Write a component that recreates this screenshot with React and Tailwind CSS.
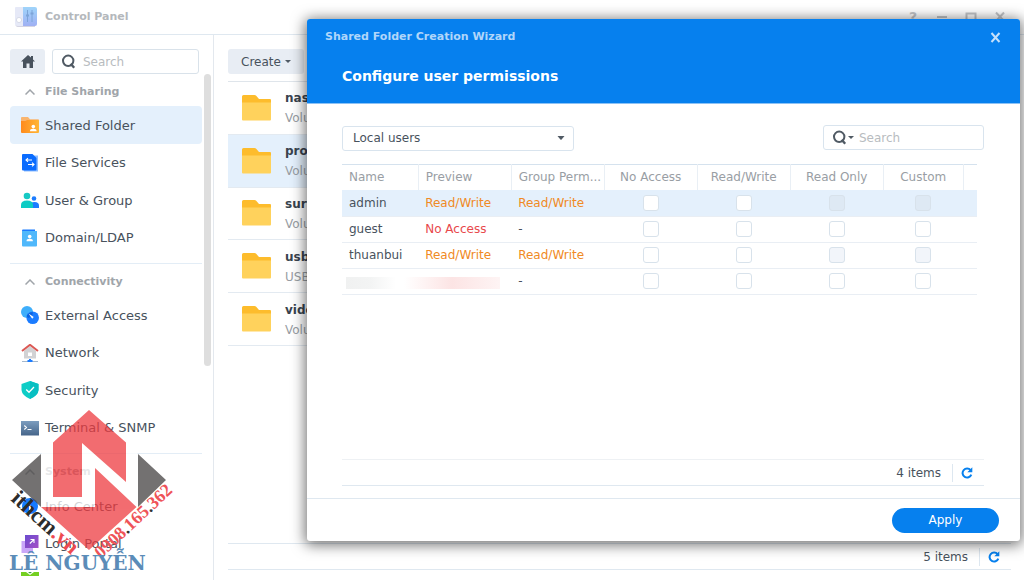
import React from "react";

function SearchIcon({ className = "" }) {
  return (
    <svg className={className} width="14" height="15" viewBox="0 0 14 15" fill="none" stroke="#505a64" strokeWidth="2">
      <circle cx="6.2" cy="6.8" r="5.2" />
      <path d="M8.600 9.800L12.200 13.800" strokeWidth="2.400" />
    </svg>
  );
}

function Caret({ className = "" }) {
  return (
    <svg className={className} width="8" height="4" viewBox="0 0 8 4" fill="#505a64">
      <path d="M0.500 0H7.500L4.600 3.500Q4 4 3.400 3.500Z" />
    </svg>
  );
}

function Folder() {
  return (
    <svg width="29" height="26" viewBox="0 0 29 26">
      <path d="M0 1.500Q0 0 1.500 0H12.500Q13.500 0 14.200 .8L17 4H28Q29 4 29 5V12H0Z" fill="#fdbc2c" />
      <path d="M0 7.500H29V24.500Q29 25.500 28 25.500H1Q0 25.500 0 24.500Z" fill="#ffd25c" />
    </svg>
  );
}

function Refresh() {
  return (
    <svg width="12" height="12" viewBox="0 0 12 12">
      <path d="M9.600 3.200A4.500 4.500 0 1 0 10.300 7.600" fill="none" stroke="#0680ee" strokeWidth="2" />
      <path d="M11.300 .3V5.300H6.300Z" fill="#0680ee" />
    </svg>
  );
}

const icons = {
  shared: (
    <>
      <path d="M0 2Q0 1 1 1H7L9 3.200H17Q18 3.200 18 4V10H0Z" fill="#f9b56f" />
      <path d="M0 5H4Q5 5 6 4H17Q18 4 18 5V16Q18 17 17 17H1Q0 17 0 16Z" fill="url(#orange)" />
      <circle cx="12.300" cy="10.600" r="1.800" fill="#fff" />
      <path d="M9 15.200Q9 12.800 12.300 12.800T15.600 15.200Z" fill="#fff" />
    </>
  ),
  file: (
    <>
      <path d="M3 1.500H17V17.500H3Z" fill="#8dbcff" />
      <path d="M1 1Q1 0 2 0H11.500L15.500 4V15.500Q15.500 16.500 14.500 16.500H2Q1 16.500 1 15.500Z" fill="#0a6cff" />
      <path d="M11 6H5.500M7 4.200L5 6L7 7.800M7 10.500H12.500M11 8.700L13 10.500L11 12.300" fill="none" stroke="#fff" strokeWidth="1.100" />
    </>
  ),
  users: (
    <>
      <circle cx="13" cy="7.500" r="2.300" fill="#1b7cff" />
      <path d="M9 17V14Q9 11 13.500 11T18 14.500V17Z" fill="#1b7cff" />
      <circle cx="6" cy="5" r="3.300" fill="#17c9c4" />
      <path d="M0 17V14Q0 9.500 6 9.500T12 14V17Z" fill="#0cccc4" />
    </>
  ),
  domain: (
    <>
      <path d="M1 1.500Q1 .5 2 .5H14V6H1Z" fill="#1b7cff" />
      <path d="M1 2H16V16.500Q16 17.500 15 17.500H2Q1 17.500 1 16.500Z" fill="#50b8fb" />
      <circle cx="8.700" cy="7.600" r="1.800" fill="#fff" />
      <path d="M5.500 12.200Q5.500 9.800 8.700 9.800T11.900 12.200Z" fill="#fff" />
    </>
  ),
  external: (
    <>
      <circle cx="6" cy="6" r="6" fill="#3eaefb" />
      <circle cx="11.700" cy="11.700" r="6.300" fill="#1b7cff" />
      <path d="M5.600 10A6.300 6.300 0 0 1 11.900 6.200A6 6 0 0 1 7 11.900Z" fill="#0b62df" />
      <path d="M7.500 7.500L12.700 11L11.200 12.800Z" fill="#fff" />
    </>
  ),
  network: (
    <>
      <path d="M3 7L9 2L15 7V14.500H3Z" fill="#d2d2d4" />
      <path d="M1 7L9 .8L17 7" fill="none" stroke="#db5854" strokeWidth="2" />
      <path d="M7 8.500H11V12H7Z" fill="#fff" />
      <path d="M1 17.500H17" stroke="#a5b9ce" strokeWidth="1" />
      <path d="M8 15H10V16H11.500V18H6.500V16H8Z" fill="#1b7cff" />
    </>
  ),
  security: (
    <>
      <path d="M9 0L17.500 3V9Q17 14.500 9 18Q1 14.500 .5 9V3Z" fill="#0ecdc6" />
      <path d="M9 0L17.500 3V9Q17 14.500 9 18Z" fill="#06bfc2" />
      <path d="M5.200 8.500L8 11.300L13 6" fill="none" stroke="#fff" strokeWidth="1.300" />
    </>
  ),
  terminal: (
    <>
      <path d="M0 2H18V16.500H0Z" fill="url(#steel)" />
      <path d="M3.300 6.500L5.500 8.500L3.300 10.500M6.500 10.500H10.500" fill="none" stroke="#fff" strokeWidth="1.100" />
    </>
  ),
  info: (
    <>
      <circle cx="9" cy="9" r="8" fill="#157aff" />
      <path d="M9 5V6.500M9 8V13" stroke="#fff" strokeWidth="2" />
    </>
  ),
  portal: (
    <>
      <path d="M.5 6H12V18H.5Z" fill="#c9a7f8" />
      <path d="M4 0H17.500V13H4Z" fill="url(#violet)" />
      <path d="M8.800 8.500L13 4.500M9.500 4.500H13V8" fill="none" stroke="#fff" strokeWidth="1.100" />
    </>
  ),
};

const groups = [
  {
    title: "File Sharing",
    items: [
      ["shared", "Shared Folder"],
      ["file", "File Services"],
      ["users", "User & Group"],
      ["domain", "Domain/LDAP"],
    ],
  },
  {
    title: "Connectivity",
    items: [
      ["external", "External Access"],
      ["network", "Network"],
      ["security", "Security"],
      ["terminal", "Terminal & SNMP"],
    ],
  },
  { title: "System", items: [["info", "Info Center"], ["portal", "Login Portal"]] },
];

const folders = [
  ["nas", "Volume 1"],
  ["program", "Volume 1"],
  ["surveillance", "Volume 1"],
  ["usbshare", "USB Disk"],
  ["video", "Volume 1"],
];

const users = [
  { name: "admin", preview: "Read/Write", group: "Read/Write", locked: true },
  { name: "guest", preview: "No Access", group: "-" },
  { name: "thuanbui", preview: "Read/Write", group: "Read/Write", locked: true },
  { name: null, preview: null, group: "-" },
];

const permissions = ["No Access", "Read/Write", "Read Only", "Custom"];

function Gradients() {
  return (
    <svg width="0" height="0" className="absolute" aria-hidden="true">
      <defs>
        <linearGradient id="orange" x1="0" y1="0" x2="1" y2="0">
          <stop offset="0" stopColor="#ff8a1c" />
          <stop offset="1" stopColor="#ffb636" />
        </linearGradient>
        <linearGradient id="steel" x1="0" y1="0" x2="0" y2="1">
          <stop offset="0" stopColor="#7c9dbf" />
          <stop offset="1" stopColor="#46658a" />
        </linearGradient>
        <linearGradient id="violet" x1="0" y1="0" x2="1" y2="1">
          <stop offset="0" stopColor="#6b4ccf" />
          <stop offset="1" stopColor="#a44fc6" />
        </linearGradient>
        <linearGradient id="panel" x1="0" y1="0" x2="0" y2="1">
          <stop offset="0" stopColor="#9fd4fa" />
          <stop offset="1" stopColor="#9fb0f3" />
        </linearGradient>
      </defs>
    </svg>
  );
}

function TitleBar() {
  return (
    <header className="flex h-[35px] shrink-0 items-center border-b border-[#dfe8f0] pr-[18px] pl-[15px]">
      <svg width="22" height="20" viewBox="0 0 22 20">
        <path d="M0 1Q0 0 1 0H8V19H2Q0 19 0 17Z" fill="#e6e9f7" />
        <path d="M8 0H20Q22 0 22 2V17Q22 19 20 19H8Z" fill="url(#panel)" />
        <path d="M1 18.500Q1 19.500 3 19.500H20" fill="none" stroke="#d4d4e2" />
        <circle cx="4" cy="13" r="2.600" fill="#fff" stroke="#d7dbe8" />
        <path d="M12.500 3V15M17 3V15" stroke="#7da4d8" />
        <path d="M11 8.500H14M15.500 6.500H18.500" stroke="#7da4d8" strokeWidth="2" />
      </svg>
      <h1 className="ml-2 text-[11px] font-bold text-[#b4b8bc]">Control Panel</h1>
      <div className="ml-auto flex items-center gap-[17px] text-[#c3c5c8]">
        <button aria-label="Help" className="w-3 text-sm leading-4 font-bold">?</button>
        <button aria-label="Minimize">
          <svg width="12" height="12" viewBox="0 0 12 12"><path d="M1 6H11" stroke="currentColor" strokeWidth="2" /></svg>
        </button>
        <button aria-label="Maximize">
          <svg width="12" height="12" viewBox="0 0 12 12"><path d="M1.500 2.500H10.500V11H1.500Z" fill="none" stroke="currentColor" strokeWidth="2" /></svg>
        </button>
        <button aria-label="Close">
          <svg width="12" height="12" viewBox="0 0 12 12"><path d="M2 1.500L10 10M10 1.500L2 10" stroke="currentColor" strokeWidth="2" /></svg>
        </button>
      </div>
    </header>
  );
}

function Sidebar() {
  return (
    <aside className="flex w-[214px] shrink-0 flex-col overflow-hidden border-r border-[#e3e8ee] pt-[14px]">
      <div className="flex h-[25px] shrink-0 gap-[7px] pr-[14px] pl-[10px]">
        <button aria-label="Home" className="flex w-[35px] items-center justify-center rounded-[3px] bg-[#e8edf4]">
          <svg width="14" height="13" viewBox="0 0 14 13" fill="#48525d">
            <path d="M7 0L10 2.600V1H12V4.500L14 6.500H12V13H8.500V8.500H5.500V13H2V6.500H0Z" />
          </svg>
        </button>
        <label className="flex min-w-0 flex-1 items-center gap-[7px] rounded-[3px] border border-[#d9e2ea] px-[9px]">
          <SearchIcon className="shrink-0" />
          <input aria-label="Search settings" placeholder="Search" className="w-full min-w-0 text-xs outline-none placeholder:text-[#b8bcc0]" />
        </label>
      </div>
      <div className="flex min-h-0 flex-1">
        <nav className="min-w-0 flex-1 overflow-hidden pt-1 pl-[10px]">
          {groups.map((g, gi) => (
            <section key={g.title} className={gi ? "border-t border-[#e3edf6] pt-1" : ""}>
              <button className="flex h-7 w-full items-center gap-[10px] pl-[15px] text-[11px] font-bold text-[#a0a5aa]">
                <svg width="10" height="6" viewBox="0 0 10 6" fill="none" stroke="#a0a5aa" strokeWidth="1.500"><path d="M.5 5.500L5 1L9.500 5.500" /></svg>
                {g.title}
              </button>
              <ul className={g.items.length === 4 ? "mb-[7px] grid h-[150px] grid-rows-4" : "mt-px grid h-[75px] grid-rows-2"}>
                {g.items.map(([icon, label]) => (
                  <li key={label}>
                    <a href="#" className={"flex h-full items-center gap-[6px] rounded-[4px] pt-px pl-[11px] text-[13px] text-[#48525d] " + (icon === "shared" ? "bg-[#e4f0fc]" : "")}>
                      <svg width="18" height="18" viewBox="0 0 18 18">{icons[icon]}</svg>
                      {label}
                    </a>
                  </li>
                ))}
              </ul>
            </section>
          ))}
          <svg className="mt-[10px] ml-[11px]" width="18" height="4" viewBox="0 0 18 4">
            <path d="M0 0H5L9 3L13 0H18V4H0Z" fill="#74cf21" />
            <path d="M7 0H11L9 1.500Z" fill="#2f9e3a" />
          </svg>
        </nav>
        <div className="mr-[2px] ml-[2px] h-[292px] w-[7px] rounded-full bg-[#dedede]" />
      </div>
    </aside>
  );
}

function Main() {
  return (
    <main className="flex min-w-0 flex-1 flex-col pt-[14px] pr-[13px] pl-[14px]">
      <div className="flex h-[33px] shrink-0 items-start border-b border-[#dfe5eb]">
        <button className="flex h-[25px] w-[76px] items-center justify-center gap-1 rounded-[3px] bg-[#e8edf4] text-xs text-[#48525d]">
          Create
          <svg width="6" height="3" viewBox="0 0 8 4" fill="#505a64"><path d="M0 0H8L4 4Z" /></svg>
        </button>
      </div>
      <ul className="grid h-[264px] grid-rows-5">
        {folders.map(([name, vol], i) => (
          <li key={name} className={"flex items-center gap-[14px] border-b border-[#e3eaf1] pl-[14px] " + (i === 1 ? "bg-[#e4f0fc]" : "")}>
            <Folder />
            <div className="pt-px text-xs leading-5">
              <p className="font-bold text-[#39434e]">{name}</p>
              <p className="text-[#989da3]">{vol}</p>
            </div>
          </li>
        ))}
      </ul>
      <footer className="mt-auto mb-[10px] flex h-[27px] items-center justify-end gap-[11px] border-y border-[#dfe8f0] pr-[11px] text-xs text-[#48525d]">
        5 items
        <span className="h-[18px] border-l border-[#dde7f0]" />
        <button aria-label="Refresh folders" className="-ml-[3px]"><Refresh /></button>
      </footer>
    </main>
  );
}

function PermissionTable() {
  return (
    <div className="pr-[7px]">
      <table className="w-full table-fixed border-collapse text-left text-xs text-[#48525d]">
        <colgroup>
          <col className="w-[12%]" />
          <col className="w-[93px]" />
          <col className="w-[93px]" />
          <col className="w-[93px]" />
          <col className="w-[93px]" />
          <col className="w-[93px]" />
          <col className="w-[80px]" />
          <col />
        </colgroup>
        <thead>
          <tr className="h-[26px] border-t border-[#d5e2ee] text-[#999ea4]">
            <th className="border-r border-[#e9eff5] pl-[7px] font-normal">Name</th>
            <th className="border-r border-[#e9eff5] pl-[7px] font-normal">Preview</th>
            <th className="border-r border-[#e9eff5] pl-[7px] font-normal whitespace-nowrap">Group Perm...</th>
            {permissions.map((p) => (
              <th key={p} className="border-r border-[#e9eff5] text-center font-normal">{p}</th>
            ))}
            <th />
          </tr>
        </thead>
        <tbody>
          {users.map((u, i) => (
            <tr key={i} className={"h-[26px] border-b border-[#e9eef4] " + (i === 0 ? "bg-[#e4f0fc]" : "")}>
              {u.name ? (
                <>
                  <td className="pl-[7px]">{u.name}</td>
                  <td className={"pl-[7px] " + (u.preview === "No Access" ? "text-[#e8484c]" : "text-[#f08a24]")}>{u.preview}</td>
                </>
              ) : (
                <td colSpan={2} className="pl-1">
                  <div className="mt-1 flex h-3 gap-2">
                    <span className="w-[50px] bg-linear-to-r from-[#f0f1f1] via-[#f3f4f4] to-white" />
                    <span className="w-[96px] bg-linear-to-r from-white via-[#fce4e4] to-[#fef4f4]" />
                  </div>
                </td>
              )}
              <td className={"pl-[7px] " + (u.group === "-" ? "" : "text-[#f08a24]")}>{u.group}</td>
              {permissions.map((p, pi) => {
                const off = u.locked && pi > 1;
                return (
                  <td key={p} className="text-center">
                    <input
                      type="checkbox"
                      aria-label={p + " for " + (u.name || "user " + (i + 1))}
                      disabled={off}
                      className={
                        "mx-auto block h-4 w-4 appearance-none rounded-[3px] border border-[#d8e2eb] " +
                        (off ? (i === 0 ? "bg-[#dee9f4]" : "bg-[#f2f5fa]") : "bg-white")
                      }
                    />
                  </td>
                );
              })}
              <td />
            </tr>
          ))}
        </tbody>
      </table>
    </div>
  );
}

function Wizard() {
  return (
    <div
      role="dialog"
      aria-labelledby="step"
      className="absolute top-[19px] right-[4px] bottom-[39px] left-[307px] flex flex-col overflow-hidden rounded-[3px] bg-white shadow-[0_2px_14px_2px_rgba(0,0,0,0.55)]"
    >
      <header className="h-[85px] shrink-0 border-b border-[#8cc2f5] bg-[#0680ee] pt-[9px] pr-[19px] pl-[18px]">
        <div className="flex h-[18px] items-center justify-between text-[11px] font-bold text-[#b0d6fa]">
          Shared Folder Creation Wizard
          <button aria-label="Close wizard">
            <svg width="11" height="11" viewBox="0 0 11 11"><path d="M1.500 1L9.500 10M9.500 1L1.500 10" stroke="#c4e0fb" strokeWidth="2" /></svg>
          </button>
        </div>
        <h2 id="step" className="mt-[20px] pl-[17px] text-sm leading-5 font-bold text-white">Configure user permissions</h2>
      </header>
      <div className="flex min-h-0 flex-1 flex-col pt-[21px] pr-[36px] pl-[35px]">
        <div className="mb-[13px] flex justify-between">
          <div className="relative w-[232px]">
            <select aria-label="User source" className="h-[25px] w-full appearance-none rounded-[3px] border border-[#d9e4ee] bg-white px-[10px] text-xs text-[#48525d] outline-none">
              <option>Local users</option>
            </select>
            <Caret className="pointer-events-none absolute top-[11px] right-[9px]" />
          </div>
          <label className="flex h-[25px] w-[161px] items-center rounded-[3px] border border-[#d9e4ee] pl-[9px]">
            <SearchIcon className="shrink-0" />
            <svg className="mr-[5px] ml-[1px] shrink-0" width="6" height="3" viewBox="0 0 8 4" fill="#505a64"><path d="M0 0H8L4 4Z" /></svg>
            <input aria-label="Search users" placeholder="Search" className="w-full min-w-0 text-xs outline-none placeholder:text-[#b8bcc0]" />
          </label>
        </div>
        <PermissionTable />
        <div className="mt-auto mb-[12px] flex h-[27px] shrink-0 items-center justify-end gap-[11px] border-t border-b border-t-[#eef1f4] border-b-[#dfe8f0] pr-[11px] text-xs text-[#48525d]">
          4 items
          <span className="h-[18px] border-l border-[#dde7f0]" />
          <button aria-label="Refresh users" className="-ml-[3px]"><Refresh /></button>
        </div>
      </div>
      <footer className="flex h-[43px] shrink-0 items-center justify-end border-t border-[#dfe8f0] pr-[21px]">
        <button className="h-[25px] w-[107px] rounded-full bg-[#0680ee] text-xs text-white">Apply</button>
      </footer>
    </div>
  );
}

function Watermark() {
  return (
    <svg className="pointer-events-none absolute bottom-0 left-0" width="180" height="180" viewBox="0 400 180 180">
      <path d="M53 443V497H82V443L126 482V442L138 454V507H136L95 468V507H41V454Z" fill="#fff" opacity=".75" />
      <g fill="#ee3a3f" opacity=".74">
        <path d="M89 410L126 442.500V482L82 443V497H53V442.500Z" />
        <path d="M95 468L136.500 507L89 550L41 507H95Z" />
      </g>
      <path d="M41 454V507L12 480ZM138 454V507L166 480Z" fill="#4b4949" opacity=".78" />
      <g fontFamily="Liberation Serif, serif" fontWeight="700">
        <text x="10" y="500" fontSize="22" transform="rotate(42 10 500)" fill="#2c2c2c">
          ithcm<tspan fill="#ee4a50">.vn</tspan>
        </text>
        <text x="101" y="559" fontSize="18" transform="rotate(-43 101 559)" fill="#ef5358">
          0908<tspan fill="#333">.</tspan>165<tspan fill="#333">.</tspan>362
        </text>
      </g>
      <text x="9" y="570" fontSize="20" fontFamily="DejaVu Serif, serif" fontWeight="700" fill="#5b8cb8">LÊ NGUYỄN</text>
    </svg>
  );
}

export default function App() {
  return (
    <div className="relative flex h-screen flex-col overflow-hidden bg-white font-['DejaVu_Sans',sans-serif]">
      <Gradients />
      <TitleBar />
      <div className="flex min-h-0 flex-1">
        <Sidebar />
        <Main />
      </div>
      <Wizard />
      <Watermark />
    </div>
  );
}
